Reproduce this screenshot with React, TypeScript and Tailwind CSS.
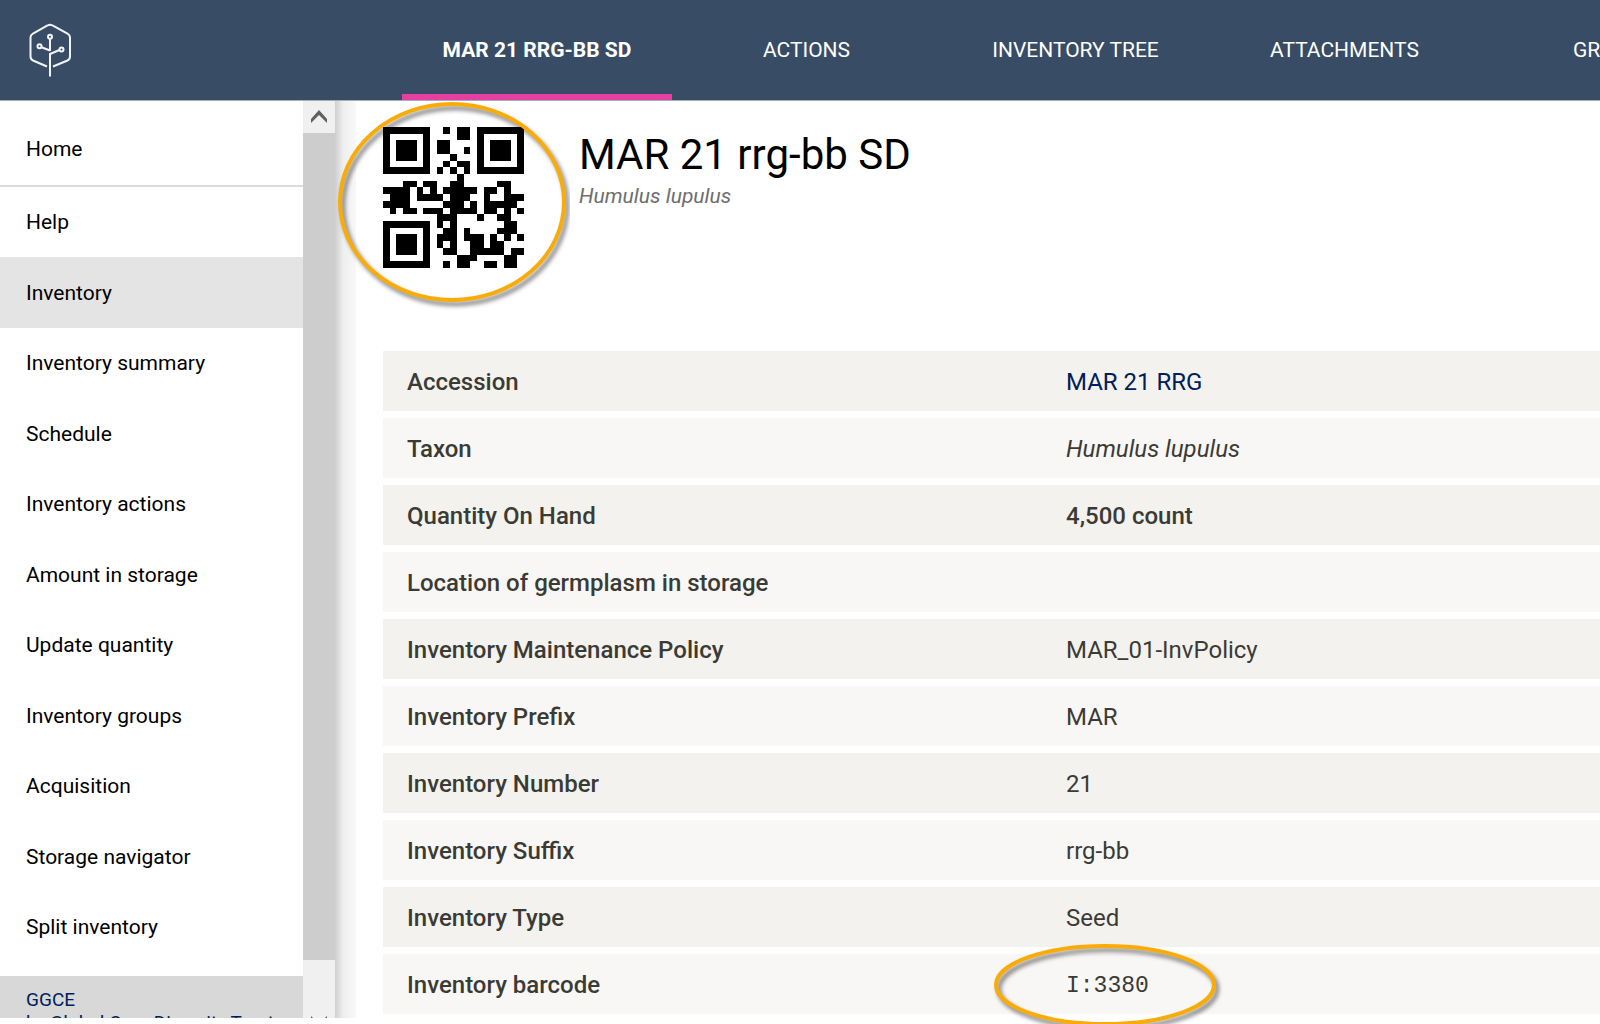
import React from 'react';

const QR = [
  '#######..#.##.#######',
  '#.....#....##.#.....#',
  '#.###.#.##....#.###.#',
  '#.###.#.##..#.#.###.#',
  '#.###.#...#...#.###.#',
  '#.....#..#.##.#.....#',
  '#######.#.#.#.#######',
  '...........#.........',
  '...##.##..##.....##..',
  '####.#.#.#####.##.#..',
  '.###.####.###..#..###',
  '####.....###.#.#####.',
  '.#.##.###.####.##.#.#',
  '........###...#..##..',
  '#######.#.#.......##.',
  '#.....#..##.#....###.',
  '#.###.#.###.###.#.#.#',
  '#.###.#.#.#..##.##...',
  '#.###.#..##..#####.##',
  '#.....#....###....##.',
  '#######..#.##..##.##.',
];

const tabs = ['ACTIONS', 'INVENTORY TREE', 'ATTACHMENTS', 'GROUPS'];

const nav = [
  'Inventory',
  'Inventory summary',
  'Schedule',
  'Inventory actions',
  'Amount in storage',
  'Update quantity',
  'Inventory groups',
  'Acquisition',
  'Storage navigator',
  'Split inventory',
];

const barcode = (
  <span className="relative font-['Liberation_Mono',monospace] text-[23px]">
    I:3380
    <svg viewBox="0 0 236 90" className="absolute -top-8 -left-[78px] h-[90px] w-[236px]" fill="none">
      <ellipse cx="117" cy="44" rx="109" ry="39" stroke="#f9ac08" strokeWidth="4" className="drop-shadow-[3px_4px_2px_rgba(0,0,0,0.5)]" />
    </svg>
  </span>
);

const rows: [string, React.ReactNode][] = [
  ['Accession', <a href="#accession" className="text-[#00205b]">MAR 21 RRG</a>],
  ['Taxon', <i>Humulus lupulus</i>],
  ['Quantity On Hand', <b className="font-medium">4,500 count</b>],
  ['Location of germplasm in storage', ''],
  ['Inventory Maintenance Policy', 'MAR_01-InvPolicy'],
  ['Inventory Prefix', 'MAR'],
  ['Inventory Number', '21'],
  ['Inventory Suffix', 'rrg-bb'],
  ['Inventory Type', 'Seed'],
  ['Inventory barcode', barcode],
];

function Logo() {
  return (
    <svg viewBox="0 0 44 56" className="h-14 w-11" fill="none" stroke="#f1f4f7" strokeWidth="2">
      <path d="M19 44.500 5 38.500Q2.500 37.300 2.500 34.500V15.500Q2.500 13 5 11.500L19.500 3.500Q22 2 24.500 3.500L39.500 11.500Q42 13 42 15.500V34.500Q42 37.300 39.500 38.500L25 44.500" />
      <path d="M22 54.500V32L31.500 28M22 29V17M22 28.500 13.500 25.300" />
      <circle cx="22" cy="14.800" r="2" />
      <circle cx="11.500" cy="24.300" r="2" />
      <circle cx="33.500" cy="27.500" r="2" />
    </svg>
  );
}

function QrCode() {
  return (
    <svg viewBox="0 0 21 21" className="size-[141px]" shapeRendering="crispEdges" role="img" aria-label="QR code">
      <path d={QR.map((r, y) => [...r].map((c, x) => (c === '#' ? `M${x} ${y}h1v1h-1z` : '')).join('')).join('')} />
    </svg>
  );
}

export default function App() {
  return (
    <div className="flex h-screen flex-col overflow-hidden bg-white font-['Roboto',sans-serif] text-black">
      <header className="flex h-[101px] shrink-0 overflow-hidden border-b border-[#a4afbb] bg-[#384d65] text-white">
        <div className="flex w-[402px] shrink-0 items-center pl-7">
          <Logo />
        </div>
        <nav className="flex text-[21px]">
          <a href="#details" className="flex w-[270px] shrink-0 items-center justify-center border-t-8 border-b-[6px] border-t-transparent border-b-[#e340a2] font-bold">
            MAR 21 RRG-BB SD
          </a>
          {tabs.map((t) => (
            <a key={t} href="#tab" className="flex w-[269px] shrink-0 items-center justify-center pt-0.5">
              {t}
            </a>
          ))}
        </nav>
      </header>

      <div className="flex min-h-0 flex-1">
        <aside className="mb-1.5 flex w-[335px] shrink-0">
          <div className="flex min-w-0 flex-1 flex-col">
            <nav className="flex min-h-0 flex-1 flex-col overflow-hidden text-[21px]">
              <a href="#home" className="flex h-[86px] shrink-0 items-center border-b-2 border-[#dcdcdc] pt-3.5 pl-[26px]">Home</a>
              <a href="#help" className="flex h-[70px] shrink-0 items-center pt-0.5 pl-[26px]">Help</a>
              {nav.map((n, i) => (
                <a key={n} href="#nav" className={`flex min-h-0 flex-1 items-center pt-0.5 pl-[26px] ${i === 0 ? 'bg-[#e4e4e4]' : ''}`}>
                  {n}
                </a>
              ))}
              <div className="h-3.5 shrink-0" />
            </nav>
            <footer className="h-[42px] shrink-0 overflow-hidden bg-[#d8d8d8] pt-3 pl-[26px] text-[19px] leading-[23px] whitespace-nowrap text-[#00205b]">
              <div>GGCE</div>
              <div>by Global Crop Diversity Trust</div>
            </footer>
          </div>
          <div className="flex w-8 shrink-0 flex-col overflow-hidden bg-[#f0f0f0]">
            <button aria-label="Scroll up" className="flex h-8 shrink-0 items-center justify-center">
              <svg viewBox="0 0 16 14" className="h-3.5 w-4">
                <path d="M0 9 8 0l8 9v4L8 5 0 13Z" fill="#606060" />
              </svg>
            </button>
            <div className="flex-1 bg-[#cdcdcd]" />
            <button aria-label="Scroll down" className="flex h-[58px] shrink-0 items-end justify-center overflow-hidden">
              <svg viewBox="0 0 16 2" className="h-0.5 w-4">
                <path d="M0 0 2 2H0ZM16 0 14 2H16Z" fill="#606060" />
              </svg>
            </button>
          </div>
        </aside>
        <div className="mb-1.5 w-[21px] shrink-0 bg-linear-to-r from-[#cfcfcf] via-[#efefef] via-40% to-[#f8f8f8]" />

        <main className="min-w-0 flex-1 pl-[27px]">
          <div className="flex h-[250px] pt-[26px]">
            <div className="relative w-[196px] shrink-0">
              <QrCode />
              <svg viewBox="0 0 236 216" className="absolute -top-[30px] -left-[49px] h-[216px] w-[236px]" fill="none">
                <ellipse cx="118" cy="105" rx="112" ry="98" stroke="#f9ac08" strokeWidth="4" className="drop-shadow-[3px_4px_2px_rgba(0,0,0,0.5)]" />
              </svg>
            </div>
            <div>
              <h1 className="text-[42px] leading-[56px]">MAR 21 rrg-bb SD</h1>
              <p className="text-[21px] leading-[26px] text-[#6e6e6e] italic">Humulus lupulus</p>
            </div>
          </div>
          <table className="w-full table-fixed border-separate border-spacing-0 text-left text-[24px] leading-8 text-[#3b3b35]">
            <colgroup>
              <col className="w-[659px]" />
              <col />
            </colgroup>
            <tbody>
              {rows.map(([k, v], i) => (
                <tr key={k} className={i % 2 ? 'bg-[#f8f7f5]' : 'bg-[#f3f2ee]'}>
                  <th className="h-[67px] border-b-[7px] border-white pt-0.5 pr-0 pb-0 pl-6 font-medium">{k}</th>
                  <td className="border-b-[7px] border-white pt-0.5 pr-0 pb-0 pl-6">{v}</td>
                </tr>
              ))}
            </tbody>
          </table>
        </main>
      </div>
    </div>
  );
}
